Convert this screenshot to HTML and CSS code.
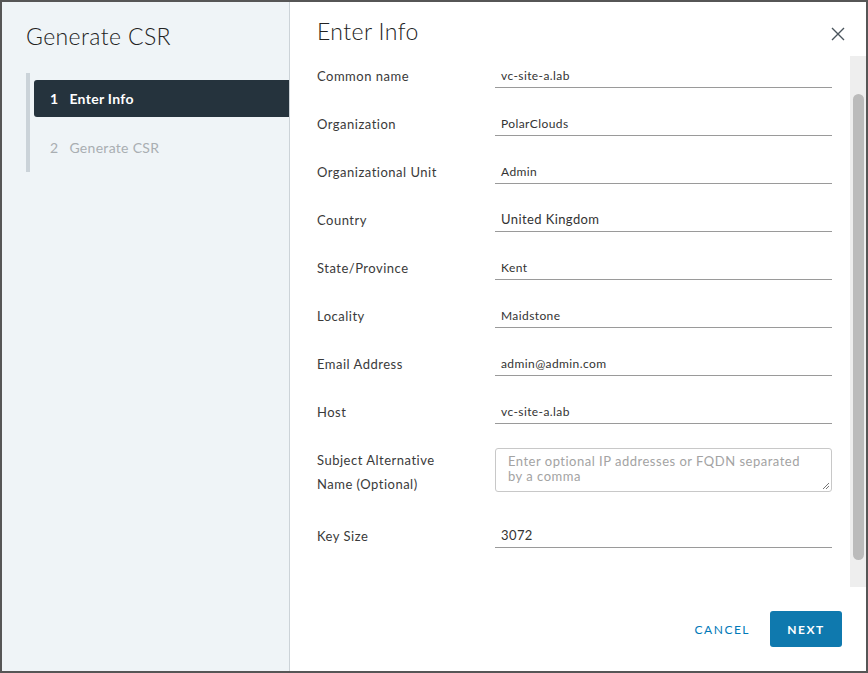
FILE: index.html
```html
<!DOCTYPE html>
<html>
<head>
<meta charset="utf-8">
<link rel="stylesheet" href="styles.css">
</head>
<body>
<div class="modal">
  <aside class="sidebar">
    <h1 class="side-title">Generate CSR</h1>
    <nav class="steps">
      <div class="step active"><span class="num">1</span>Enter Info</div>
      <div class="step"><span class="num">2</span>Generate CSR</div>
    </nav>
  </aside>
  <section class="main">
    <header class="main-head">
      <h2 class="main-title">Enter Info</h2>
      <svg class="close" width="14" height="14" viewBox="0 0 14 14"><path d="M1 1L13 13M13 1L1 13" stroke="#4a545c" stroke-width="1.4" fill="none"/></svg>
    </header>
    <div class="scroll">
      <div class="form">
        <div class="row"><label>Common name</label><div class="field">vc-site-a.lab</div></div>
        <div class="row"><label>Organization</label><div class="field">PolarClouds</div></div>
        <div class="row"><label>Organizational Unit</label><div class="field">Admin</div></div>
        <div class="row"><label>Country</label><div class="field big">United Kingdom</div></div>
        <div class="row"><label>State/Province</label><div class="field">Kent</div></div>
        <div class="row"><label>Locality</label><div class="field">Maidstone</div></div>
        <div class="row"><label>Email Address</label><div class="field">admin@admin.com</div></div>
        <div class="row"><label>Host</label><div class="field">vc-site-a.lab</div></div>
        <div class="row tall"><label>Subject Alternative<br>Name (Optional)</label><div class="textarea">Enter optional IP addresses or FQDN separated by a comma<svg class="grip" width="8" height="8" viewBox="0 0 8 8"><path d="M7 1L1 7M7 4L4 7" stroke="#777" stroke-width="1"/></svg></div></div>
        <div class="row last"><label>Key Size</label><div class="field big">3072</div></div>
      </div>
      <div class="scrollbar"><div class="thumb"></div></div>
    </div>
    <footer class="foot">
      <button class="btn link">CANCEL</button>
      <button class="btn primary">NEXT</button>
    </footer>
  </section>
</div>
</body>
</html>
```
FILE: styles.css
```css
* { box-sizing: border-box; }
html, body { margin: 0; padding: 0; }
body {
  background: #565656;
  width: 868px;
  height: 673px;
  overflow: hidden;
  font-family: Lato, "Open Sans", sans-serif;
  color: #333;
}
.modal {
  margin: 2px;
  width: 864px;
  height: 669px;
  display: flex;
  background: #fff;
}
.sidebar {
  width: 288px;
  flex: none;
  background: #eff4f7;
  border-right: 1px solid #ccd3d8;
  padding: 20px 0 0 24px;
}
.side-title {
  margin: 0;
  font-size: 23px;
  font-weight: 300;
  line-height: 28px;
  letter-spacing: 0.4px;
  color: #222;
}
.steps {
  margin-top: 23px;
  border-left: 4px solid #cbd3d9;
  padding: 7px 0 6px 4px;
  display: flex;
  flex-direction: column;
  gap: 12px;
}
.step {
  height: 37px;
  display: flex;
  align-items: center;
  padding-left: 16px;
  font-size: 14px;
  letter-spacing: 0.3px;
  color: #a9aeb2;
}
.step .num { margin-right: 11px; }
.step.active {
  background: #25333d;
  color: #fff;
  font-weight: 700;
  border-radius: 3px 0 0 3px;
}
.main {
  flex: 1;
  display: flex;
  flex-direction: column;
  min-width: 0;
}
.main-head {
  height: 54px;
  flex: none;
  display: flex;
  align-items: center;
  justify-content: space-between;
  padding: 0 21px 0 27px;
}
.main-title {
  margin: 0;
  font-size: 23px;
  font-weight: 300;
  letter-spacing: 0.4px;
  color: #222;
  position: relative;
  top: 2px;
}
.close { margin-top: 10px; }
.scroll {
  height: 531px;
  flex: none;
  display: flex;
}
.form {
  flex: 1;
  padding: 8px 18px 0 27px;
}
.row {
  display: flex;
  height: 24px;
  margin-bottom: 24px;
}
.row label {
  width: 178px;
  flex: none;
  font-size: 13px;
  line-height: 24px;
  letter-spacing: 0.5px;
  color: #3a3a3a;
}
.field {
  flex: 1;
  border-bottom: 1px solid #9a9a9a;
  font-size: 12px;
  line-height: 23px;
  letter-spacing: 0.4px;
  padding-left: 6px;
  color: #333;
}
.field.big { font-size: 13px; }
.row.tall { height: 48px; margin-bottom: 28px; }
.textarea {
  flex: 1;
  height: 44px;
  border: 1px solid #c8c8c8;
  border-radius: 3px;
  padding: 5px 28px 5px 12px;
  font-size: 13px;
  line-height: 15px;
  letter-spacing: 0.5px;
  color: #a3a3a3;
  position: relative;
}
.grip { position: absolute; right: 1px; bottom: 1px; }
.scrollbar {
  width: 16px;
  flex: none;
  background: #eeeeee;
  padding: 38px 2px 0 3px;
}
.thumb {
  height: 466px;
  background: #bbbbbb;
  border-radius: 6px;
}
.foot {
  flex: 1;
  display: flex;
  align-items: center;
  justify-content: flex-end;
  gap: 8px;
  padding-right: 24px;
}
.btn {
  font-family: Lato, "Open Sans", sans-serif;
  border: none;
  height: 36px;
  font-size: 12px;
  letter-spacing: 1.5px;
  border-radius: 3px;
  cursor: pointer;
}
.btn.link {
  background: transparent;
  color: #0079b8;
  padding: 0 12px;
}
.btn.primary {
  background: #0f79ae;
  color: #fff;
  font-weight: 700;
  width: 72px;
  padding: 0;
}
```
